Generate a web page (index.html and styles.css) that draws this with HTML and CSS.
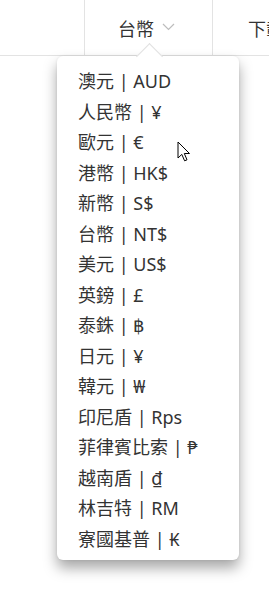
FILE: index.html
```html
<!DOCTYPE html>
<html lang="zh-Hant">
<head>
    <meta charset="UTF-8">
    <meta name="viewport" content="width=device-width, initial-scale=1.0">
    <title>幣別選單</title>
    <link rel="stylesheet" href="styles.css">
</head>
<body>
    <div class="topbar">
        <div class="cell"></div>
        <div class="cell current">
            <span>台幣</span>
            <svg class="chevron" width="13" height="8" viewBox="0 0 13 8">
                <polyline points="1,1 6.5,6.5 12,1" fill="none" stroke="#bdbdbd" stroke-width="1.2"/>
            </svg>
        </div>
        <div class="cell next">下載</div>
    </div>

    <div class="dropdown">
        <ul class="currency-list">
            <li>澳元 | AUD</li>
            <li>人民幣 | ¥</li>
            <li>歐元 | €</li>
            <li>港幣 | HK$</li>
            <li>新幣 | S$</li>
            <li>台幣 | NT$</li>
            <li>美元 | US$</li>
            <li>英鎊 | £</li>
            <li>泰銖 | ฿</li>
            <li>日元 | ¥</li>
            <li>韓元 | ₩</li>
            <li>印尼盾 | Rps</li>
            <li>菲律賓比索 | ₱</li>
            <li>越南盾 | ₫</li>
            <li>林吉特 | RM</li>
            <li>寮國基普 | ₭</li>
        </ul>
    </div>

    <svg class="cursor" width="14" height="22" viewBox="0 0 14 22">
        <path d="M1 1 L1 17 L4.8 13.4 L7.6 19.8 L10 18.8 L7.3 12.5 L12.5 12.5 Z" fill="#fff" stroke="#000" stroke-width="1" stroke-linejoin="round"/>
    </svg>
</body>
</html>
```

FILE: styles.css
```css
body {
    margin: 0;
    font-family: "Noto Sans", "Noto Sans CJK TC", sans-serif;
    color: #333;
    background: #fff;
}

.topbar {
    display: grid;
    grid-template-columns: 84px 128px 1fr;
    height: 55px;
    border-bottom: 1px solid #e3e3e3;
}

.cell {
    display: flex;
    align-items: center;
    font-size: 18px;
}

.cell + .cell {
    border-left: 1px solid #e3e3e3;
}

.current {
    justify-content: center;
    gap: 8px;
    padding-right: 4px;
}

.chevron {
    margin-top: -2px;
}

.next {
    padding-left: 35px;
    white-space: nowrap;
    overflow: hidden;
}

.dropdown {
    position: absolute;
    left: 57px;
    top: 56px;
    width: 182px;
    background: #fff;
    border-radius: 6px;
    box-shadow: 0 8px 14px rgba(0, 0, 0, 0.35), 0 0 3px rgba(0, 0, 0, 0.08);
}

.dropdown::before {
    content: "";
    position: absolute;
    left: 83px;
    top: -9px;
    width: 18px;
    height: 18px;
    background: #fff;
    border-top: 1px solid #e0e0e0;
    border-left: 1px solid #e0e0e0;
    transform: rotate(45deg);
}

.currency-list {
    position: relative;
    list-style: none;
    margin: 0;
    padding: 10px 0 6px 21px;
}

.currency-list li {
    height: 30.5px;
    line-height: 30.5px;
    font-size: 18px;
    white-space: nowrap;
}

.cursor {
    position: absolute;
    left: 177px;
    top: 141px;
}
```
